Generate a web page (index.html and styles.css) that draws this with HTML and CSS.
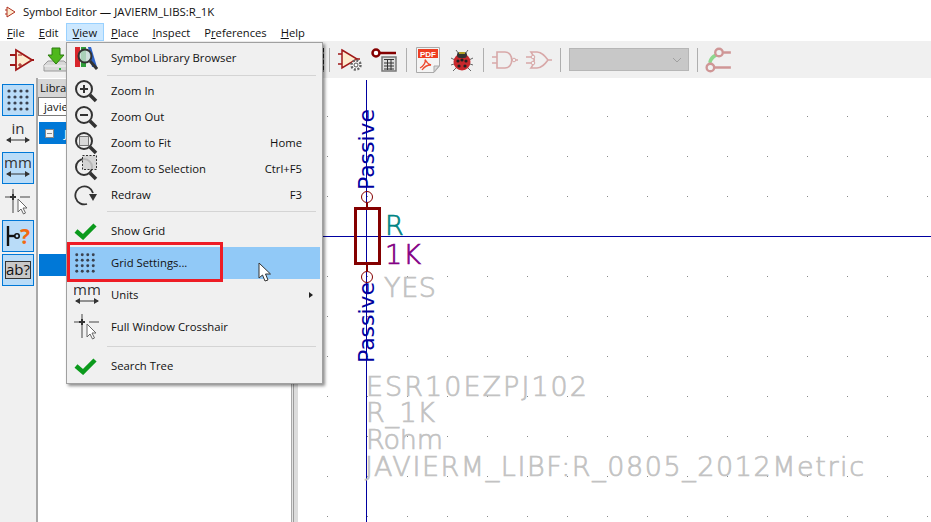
FILE: index.html
```html
<!DOCTYPE html>
<html lang="en">
<head>
  <meta charset="UTF-8">
  <title>Symbol Editor</title>
  <link rel="stylesheet" href="styles.css">
</head>
<body>

  <svg class="defs" width="0" height="0">
    <symbol id="i-grid" viewBox="0 0 24 24">
      <g fill="#3a4250">
        <circle cx="3" cy="3" r="1.6"/><circle cx="9" cy="3" r="1.6"/><circle cx="15" cy="3" r="1.6"/><circle cx="21" cy="3" r="1.6"/>
        <circle cx="3" cy="9" r="1.6"/><circle cx="9" cy="9" r="1.6"/><circle cx="15" cy="9" r="1.6"/><circle cx="21" cy="9" r="1.6"/>
        <circle cx="3" cy="15" r="1.6"/><circle cx="9" cy="15" r="1.6"/><circle cx="15" cy="15" r="1.6"/><circle cx="21" cy="15" r="1.6"/>
        <circle cx="3" cy="21" r="1.6"/><circle cx="9" cy="21" r="1.6"/><circle cx="15" cy="21" r="1.6"/><circle cx="21" cy="21" r="1.6"/>
      </g>
    </symbol>
    <symbol id="i-span" viewBox="0 0 26 24">
      <path d="M2 19H24" stroke="#333" fill="none"/>
      <path d="M1 19l5-3v6zM25 19l-5-3v6z" fill="#333"/>
    </symbol>
    <symbol id="i-cross" viewBox="0 0 26 26">
      <path d="M0 8H9M15 8H25M8 0V6M8 11V24" stroke="#9a9a9a" stroke-width="2" fill="none"/>
      <path d="M5 8H11M8 5V11" stroke="#333" stroke-width="2" fill="none"/>
      <path d="M13 10V23L16 20L18.500 25L20.500 24L18 19H22Z" fill="#fff" stroke="#666"/>
    </symbol>
    <symbol id="i-check" viewBox="0 0 24 18">
      <path d="M2 9L9 15L21 3" stroke="#0b9a1c" stroke-width="4.500" fill="none"/>
    </symbol>
    <symbol id="i-lens" viewBox="0 0 24 24">
      <circle cx="10" cy="10" r="8" fill="none" stroke="#333" stroke-width="2"/>
      <path d="M16 16L22 22" stroke="#333" stroke-width="3.500"/>
    </symbol>
    <symbol id="i-amp" viewBox="0 0 24 24">
      <path d="M6 2L22 12L6 22Z" fill="#fdeccf" stroke="#a01818" stroke-width="1.800"/>
      <path d="M0 7H6M0 17H6M22 12H24" stroke="#a01818" stroke-width="1.800"/>
      <path d="M8 7H12M10 15V19M8 17H12" stroke="#a01818"/>
    </symbol>
  </svg>

  <div class="titlebar">
    <svg class="title-icon" viewBox="0 0 12 12">
      <path d="M2 1L10 6L2 11Z" fill="#fdeccf" stroke="#b03020"/>
      <path d="M0 4H2M0 8H2" stroke="#b03020"/>
    </svg>
    Symbol Editor — JAVIERM_LIBS:R_1K
  </div>

  <div class="menubar">
    <span class="menu-title"><u>F</u>ile</span>
    <span class="menu-title"><u>E</u>dit</span>
    <span class="menu-title active"><u>V</u>iew</span>
    <span class="menu-title"><u>P</u>lace</span>
    <span class="menu-title"><u>I</u>nspect</span>
    <span class="menu-title">P<u>r</u>eferences</span>
    <span class="menu-title"><u>H</u>elp</span>
  </div>

  <div class="toolbar">
    <span class="tool"><svg class="ico-24" viewBox="0 0 24 24"><use href="#i-amp"/></svg></span>
    <span class="tool">
      <svg class="ico-26" viewBox="0 0 26 26">
        <path d="M1 18L5 14H21L25 18V24H1Z" fill="#d8d8d8" stroke="#9a9a9a"/>
        <path d="M1 19H25" stroke="#f4f4f4"/>
        <rect x="16" y="21" width="2" height="2" fill="#27b838"/>
        <path d="M9 1H17V8H21L13 17L5 8H9Z" fill="#4fb81c" stroke="#2c7a10"/>
      </svg>
    </span>
    <div class="tb-hidden"><span class="sliver"></span></div>
    <span class="tb-sep"></span>
    <span class="tool">
      <svg class="ico-26" viewBox="0 0 26 26">
        <path d="M4 3L19 12L4 21Z" fill="#fdeccf" stroke="#a01818" stroke-width="1.500"/>
        <path d="M0 7H4M0 17H4M19 12H22" stroke="#a01818" stroke-width="1.500"/>
        <circle cx="18" cy="18" r="4.500" fill="#fff" stroke="#666" stroke-width="2.500" stroke-dasharray="2 1.500"/>
        <circle cx="18" cy="18" r="2" fill="none" stroke="#555"/>
      </svg>
    </span>
    <span class="tool">
      <svg class="ico-28" viewBox="0 0 28 26">
        <circle cx="5" cy="6" r="3.500" fill="#fff" stroke="#840000" stroke-width="2.500"/>
        <path d="M9 6H25" stroke="#840000" stroke-width="2.500"/>
        <rect x="11" y="10" width="14" height="14" fill="#ddd" stroke="#777" stroke-width="1.500"/>
        <path d="M13 12.500H23M13 16H23M13 19H23M13 22H23M16.500 12V23M20 12V23" stroke="#333"/>
      </svg>
    </span>
    <span class="tb-sep"></span>
    <span class="tool">
      <svg class="ico-26" viewBox="0 0 24 26">
        <path d="M0.500 0.500H23.500V19L18 25.500H0.500Z" fill="#f4f4f4" stroke="#aaa"/>
        <rect x="2" y="2" width="20" height="9" fill="#ee3e22"/>
        <text x="12" y="10" text-anchor="middle" class="pdf-text">PDF</text>
        <path d="M4 21C8 19 10 15 9 12.500C11 16 12 17 15 18C11 18 8 20 6 23" fill="none" stroke="#ee4a30" stroke-width="1.300"/>
        <path d="M18 25L23 19H18Z" fill="#ddd" stroke="#aaa"/>
      </svg>
    </span>
    <span class="tool">
      <svg class="ico-24" viewBox="0 0 24 24">
        <path d="M6 2L9 6M18 2L15 6M5 12L1 10M19 12L23 10M4 16L1 17M20 16L23 17M6 20L3 23M18 20L21 23" stroke="#666" fill="none"/>
        <circle cx="12" cy="14" r="8.500" fill="#c8282c"/>
        <rect x="7" y="4" width="10" height="6" rx="3" fill="#333"/>
        <path d="M9 5H15" stroke="#d8c020" stroke-width="1.500"/>
        <circle cx="8" cy="13" r="1.600" fill="#222"/><circle cx="16" cy="13" r="1.600" fill="#222"/>
        <circle cx="12" cy="12" r="1.600" fill="#222"/><circle cx="9" cy="18" r="1.600" fill="#222"/><circle cx="15" cy="18" r="1.600" fill="#222"/>
      </svg>
    </span>
    <span class="tb-sep"></span>
    <span class="tool">
      <svg class="ico-26" viewBox="0 0 26 18">
        <path d="M5 1H13C22 1 22 17 13 17H5ZM0 6H5M0 12H5M21 9H26" fill="none" stroke="#d8a8a8" stroke-width="1.600"/>
        <circle cx="22" cy="9" r="1.800" fill="#f0f0f0" stroke="#d8a8a8"/>
      </svg>
    </span>
    <span class="tool">
      <svg class="ico-26" viewBox="0 0 26 18">
        <path d="M5 1H11C16 1 19 5 22 9C19 13 16 17 11 17H5C9 12 9 6 5 1ZM0 6H7M0 12H7M22 9H26" fill="none" stroke="#d8a8a8" stroke-width="1.600"/>
        <circle cx="7" cy="6" r="1.800" fill="#f0f0f0" stroke="#d8a8a8"/><circle cx="7" cy="12" r="1.800" fill="#f0f0f0" stroke="#d8a8a8"/>
      </svg>
    </span>
    <span class="tb-sep"></span>
    <div class="combo">
      <svg class="combo-arrow" viewBox="0 0 10 6"><path d="M1 1L5 5L9 1" fill="none" stroke="#a0a0a0"/></svg>
    </div>
    <span class="tb-sep"></span>
    <span class="tool">
      <svg class="ico-28" viewBox="0 0 26 24">
        <path d="M3 14C4 9 8 6 11 6L13 8C8 10 6 13 6 16Z" fill="#8ed88e"/>
        <circle cx="13" cy="5" r="3.500" fill="#f0f0f0" stroke="#cf9696" stroke-width="2.200"/>
        <circle cx="5" cy="19" r="3.500" fill="#f0f0f0" stroke="#cf9696" stroke-width="2.200"/>
        <path d="M17 5H24M9 19H24" stroke="#cf9696" stroke-width="2.200"/>
      </svg>
    </span>
  </div>

  <div class="main">
    <div class="lefttools">
      <div class="ltool on"><svg class="ico-24" viewBox="0 0 24 24"><use href="#i-grid"/></svg></div>
      <div class="ltool">
        <svg class="ico-26 ico-unit" viewBox="0 -3 26 26"><text x="13" y="13" text-anchor="middle" class="icon-text">in</text><use href="#i-span" width="26" height="24"/></svg>
      </div>
      <div class="ltool on">
        <svg class="ico-26 ico-unit" viewBox="0 -3 26 26"><text x="13" y="13" text-anchor="middle" class="icon-text">mm</text><use href="#i-span" width="26" height="24"/></svg>
      </div>
      <div class="ltool"><svg class="ico-26" viewBox="0 0 26 26"><use href="#i-cross"/></svg></div>
      <div class="ltool on">
        <svg class="ico-26" viewBox="0 0 26 26">
          <path d="M3 3V23" stroke="#111" stroke-width="2.400"/>
          <path d="M3 13H10" stroke="#111" stroke-width="2.400"/>
          <circle cx="12" cy="13" r="2.200" fill="none" stroke="#111" stroke-width="1.600"/>
          <text x="20" y="21" text-anchor="middle" class="q-text">?</text>
        </svg>
      </div>
      <div class="ltool on">
        <svg class="ico-26" viewBox="0 0 26 18">
          <rect x="0.500" y="0.500" width="25" height="17" fill="#c8c8c8" stroke="#333"/>
          <text x="13" y="14" text-anchor="middle" class="ab-text">ab?</text>
        </svg>
      </div>
    </div>

    <div class="libpanel">
      <div class="panel-head">Libraries</div>
      <div class="panel-search">javierm</div>
      <div class="tree">
        <div class="tree-row"><span class="expander"></span><span class="tree-label">JAVIERM_LIBS</span></div>
        <div class="tree-gap"></div>
        <div class="tree-row"></div>
      </div>
    </div>
    <div class="sash"></div>

    <div class="canvas">
      <svg class="sheet" viewBox="298 78 633 444">
        <defs>
          <pattern id="dots" x="7" y="36" width="40" height="40" patternUnits="userSpaceOnUse">
            <rect width="1" height="1" fill="#8a8a8a"/>
          </pattern>
        </defs>
        <rect x="298" y="78" width="633" height="444" fill="url(#dots)"/>
        <path d="M366.500 80V522M298 236.500H931" stroke="#0000a0" fill="none"/>
        <path d="M367 203V208M367 264V271" stroke="#840000" stroke-width="2"/>
        <circle cx="367" cy="197" r="5.500" fill="none" stroke="#840000"/>
        <circle cx="367" cy="277" r="5.500" fill="none" stroke="#840000"/>
        <rect x="355.500" y="208.500" width="24" height="55" fill="none" stroke="#840000" stroke-width="3"/>
        <text transform="translate(374 190) rotate(-90)" textLength="81" class="pin-name">Passive</text>
        <text transform="translate(374 363) rotate(-90)" textLength="81" class="pin-name">Passive</text>
        <text x="385" y="235" class="field f-ref">R</text>
        <text x="385" y="264" textLength="36" class="field f-val">1K</text>
        <text x="384" y="297" textLength="52" class="field f-gray">YES</text>
        <text x="366" y="396" textLength="221" class="field f-gray">ESR10EZPJ102</text>
        <text x="366" y="422" textLength="69" class="field f-gray">R_1K</text>
        <text x="366" y="449" textLength="77" class="field f-gray">Rohm</text>
        <text x="365" y="476" textLength="499" class="field f-gray">JAVIERM_LIBF:R_0805_2012Metric</text>
      </svg>
    </div>
  </div>

  <div class="dropdown">
    <div class="item item-first">
      <svg class="ico-24 m-ico" viewBox="0 0 24 24">
        <rect x="1" y="1" width="5" height="20" fill="#d8262c"/>
        <rect x="7" y="1" width="5" height="20" fill="#2f9e3a"/>
        <path d="M14 1H17L23 21H18Z" fill="#2c62c8"/>
        <circle cx="11" cy="10" r="6.500" fill="#c8dcd8" fill-opacity=".8" stroke="#333" stroke-width="2"/>
        <path d="M16 15L23 23" stroke="#333" stroke-width="3"/>
      </svg>
      <span class="item-label">Symbol Library Browser</span>
    </div>
    <div class="sep"></div>
    <div class="item">
      <svg class="ico-24 m-ico" viewBox="0 0 24 24"><use href="#i-lens"/><path d="M6 10H14M10 6V14" stroke="#333" stroke-width="2"/></svg>
      <span class="item-label">Zoom In</span>
    </div>
    <div class="item">
      <svg class="ico-24 m-ico" viewBox="0 0 24 24"><use href="#i-lens"/><path d="M6 10H14" stroke="#333" stroke-width="2"/></svg>
      <span class="item-label">Zoom Out</span>
    </div>
    <div class="item">
      <svg class="ico-24 m-ico" viewBox="0 0 24 24"><use href="#i-lens"/><rect x="5.500" y="5.500" width="9" height="9" fill="#d8d8d8" stroke="#777"/></svg>
      <span class="item-label">Zoom to Fit</span><span class="shortcut">Home</span>
    </div>
    <div class="item">
      <svg class="ico-26 m-ico m-zsel" viewBox="0 0 26 26">
        <use href="#i-lens" width="24" height="24" y="2"/>
        <rect x="8.500" y="0.500" width="14" height="14" fill="#cfcfcf" fill-opacity=".85" stroke="#333" stroke-dasharray="2 1.500"/>
      </svg>
      <span class="item-label">Zoom to Selection</span><span class="shortcut">Ctrl+F5</span>
    </div>
    <div class="item">
      <svg class="ico-24 m-ico" viewBox="0 0 24 24">
        <path d="M13 21A9 9 0 1 1 19 10" fill="none" stroke="#333" stroke-width="1.800"/>
        <path d="M15 11H23L19 18Z" fill="#333"/>
      </svg>
      <span class="item-label">Redraw</span><span class="shortcut">F3</span>
    </div>
    <div class="sep"></div>
    <div class="item item-check">
      <svg class="ico-check m-ico" viewBox="0 0 24 18"><use href="#i-check"/></svg>
      <span class="item-label">Show Grid</span>
    </div>
    <div class="item item-tall hover">
      <svg class="ico-22 m-ico" viewBox="0 0 24 24"><use href="#i-grid"/></svg>
      <span class="item-label">Grid Settings...</span>
    </div>
    <div class="item item-tall">
      <svg class="ico-26 m-ico m-unit" viewBox="0 -3 26 26"><text x="13" y="13" text-anchor="middle" class="icon-text">mm</text><use href="#i-span" width="26" height="24"/></svg>
      <span class="item-label">Units</span>
      <span class="submenu-arrow"></span>
    </div>
    <div class="item item-tall">
      <svg class="ico-26 m-ico" viewBox="0 0 26 26"><use href="#i-cross"/></svg>
      <span class="item-label">Full Window Crosshair</span>
    </div>
    <div class="sep"></div>
    <div class="item item-last">
      <svg class="ico-check m-ico" viewBox="0 0 24 18"><use href="#i-check"/></svg>
      <span class="item-label">Search Tree</span>
    </div>
    <div class="callout"></div>
  </div>

  <svg class="cursor" viewBox="0 0 14 20">
    <path d="M1 1V16L4.500 13L7 19L10 18L7.500 12H12.500Z" fill="#fff" stroke="#333"/>
  </svg>

</body>
</html>
```

FILE: styles.css
```css
html, body {
  margin: 0;
  height: 100%;
}

body {
  position: relative;
  width: 931px;
  height: 522px;
  overflow: hidden;
  display: flex;
  flex-direction: column;
  background: #fff;
  color: #111;
  font-family: "Open Sans", "Noto Sans", sans-serif;
  font-size: 11.2px;
}

.defs {
  position: absolute;
}

.icon-text {
  font-family: "Open Sans", sans-serif;
  font-size: 15px;
  fill: #333;
}

.pdf-text {
  font-family: "Liberation Sans", sans-serif;
  font-size: 8px;
  font-weight: bold;
  fill: #fff;
}

.q-text {
  font-family: "Open Sans", sans-serif;
  font-size: 21px;
  font-weight: bold;
  fill: #f26a10;
}

.ab-text {
  font-family: "Open Sans", sans-serif;
  font-size: 15px;
  fill: #111;
}

.ico-22 { width: 22px; height: 22px; }
.ico-24 { width: 24px; height: 24px; }
.ico-26 { width: 26px; height: 26px; }
.ico-28 { width: 28px; height: 26px; }
.ico-check { width: 24px; height: 18px; }
.ico-unit { margin-top: -6px; }

/* title + menu */
.titlebar {
  height: 23px;
  display: flex;
  align-items: center;
  padding-left: 5px;
  font-size: 11.4px;
}

.title-icon {
  width: 12px;
  height: 12px;
  margin-right: 6px;
}

.menubar {
  height: 18px;
  display: flex;
}

.menu-title {
  display: flex;
  align-items: center;
  white-space: pre;
  padding: 0 6px;
  border: 1px solid transparent;
}

.menu-title.active {
  background: #cce8ff;
  border-color: #99d1ff;
}

/* top toolbar */
.toolbar {
  height: 37px;
  background: #f0f0f0;
  display: flex;
  align-items: center;
  padding-left: 6px;
  gap: 2px;
}

.tool {
  width: 32px;
  display: flex;
  justify-content: center;
  align-items: center;
}

.tb-hidden {
  width: 250px;
  display: flex;
  justify-content: flex-end;
}

.sliver {
  width: 2px;
  height: 24px;
  background: repeating-linear-gradient(#222 0 4px, #888 4px 6px);
}

.tb-sep {
  width: 1px;
  height: 24px;
  margin: 0 3px;
  background: #aeaeae;
}

.combo {
  width: 120px;
  height: 23px;
  margin: 0 3px;
  box-sizing: border-box;
  background: #c8c8c8;
  border: 1px solid #b6b6b6;
  display: flex;
  align-items: center;
  justify-content: flex-end;
  padding-right: 6px;
}

.combo-arrow {
  width: 10px;
  height: 6px;
}

/* main area */
.main {
  flex: 1;
  display: flex;
  min-height: 0;
}

.lefttools {
  width: 36px;
  flex: none;
  background: #f0f0f0;
  padding-top: 6px;
  box-sizing: border-box;
}

.ltool {
  width: 32px;
  height: 32px;
  margin: 0 0 2px 2px;
  box-sizing: border-box;
  border: 1px solid transparent;
  display: flex;
  align-items: center;
  justify-content: center;
}

.ltool.on {
  background: #b9dcf8;
  border-color: #0078d7;
}

.libpanel {
  width: 255px;
  flex: none;
  border-left: 2px solid #a8a8a8;
  box-sizing: border-box;
  display: flex;
  flex-direction: column;
}

.panel-head {
  height: 18px;
  margin-top: 1px;
  padding-left: 2px;
  background: #d6d6d6;
  line-height: 18px;
}

.panel-search {
  height: 19px;
  padding-left: 5px;
  border: 1px solid #7a7a7a;
  box-sizing: border-box;
  line-height: 17px;
  background: #fff;
}

.tree {
  flex: 1;
  padding: 6px 0 0 1px;
  background: #fff;
}

.tree-row {
  height: 22px;
  background: #0078d7;
  color: #fff;
  display: flex;
  align-items: center;
}

.tree-gap {
  height: 110px;
}

.expander {
  width: 9px;
  height: 9px;
  margin-left: 6px;
  box-sizing: border-box;
  border: 1px solid #888;
  background: linear-gradient(#888, #888) center / 5px 1px no-repeat, #f4f4f4;
}

.tree-label {
  margin-left: 10px;
}

.sash {
  width: 7px;
  flex: none;
  background: linear-gradient(90deg, #a8a8a8 0 1px, #e4e4e4 1px 2px, #9c9c9c 2px 3px, #dcdcdc 3px);
}

.canvas {
  flex: 1;
  min-width: 0;
}

.sheet {
  display: block;
  width: 633px;
  height: 444px;
}

.field {
  font-family: "DejaVu Sans", "Liberation Sans", sans-serif;
  font-size: 27px;
  font-weight: 200;
  stroke-width: 0.7px;
}

.pin-name {
  font-family: "DejaVu Sans", "Liberation Sans", sans-serif;
  font-size: 22px;
  fill: #0000a0;
}

.f-ref { fill: #008484; stroke: #008484; }
.f-val { fill: #840084; stroke: #840084; }
.f-gray { fill: #c2c2c2; stroke: #c2c2c2; }

/* open menu, lies over the window */
.dropdown {
  position: absolute;
  left: 66px;
  top: 42px;
  width: 257px;
  height: 342px;
  box-sizing: border-box;
  background: #f0f0f0;
  border: 1px solid #a0a0a0;
  box-shadow: 2px 2px 3px rgba(0, 0, 0, 0.45);
  font-size: 11.3px;
}

.item {
  height: 26px;
  margin-right: 2px;
  display: flex;
  align-items: center;
  position: relative;
}

.item-first { height: 29px; }
.item-tall { height: 32px; }
.item-check { height: 33px; }
.item-last { height: 34px; }

.item.hover {
  background: #91c9f7;
}

.m-ico {
  position: absolute;
  left: 7px;
  top: 50%;
  transform: translateY(-50%);
}

.m-zsel {
  margin-top: -1px;
}

.m-unit {
  margin-top: -3px;
}

.item-label {
  margin-left: 44px;
  padding-bottom: 2px;
}

.item-first .item-label,
.item-check .item-label {
  padding-bottom: 0;
}

.shortcut {
  margin-left: auto;
  margin-right: 18px;
  padding-bottom: 2px;
}

.submenu-arrow {
  margin-left: auto;
  margin-right: 7px;
  border-left: 4px solid #222;
  border-top: 3.5px solid transparent;
  border-bottom: 3.5px solid transparent;
}

.sep {
  height: 1px;
  margin: 2.5px 6px 2.5px 40px;
  background: #d4d4d4;
}

.callout {
  position: absolute;
  left: 0;
  top: 199px;
  width: 156px;
  height: 40px;
  box-sizing: border-box;
  border: 3px solid #ee1c25;
}

.cursor {
  position: absolute;
  left: 258px;
  top: 262px;
  width: 14px;
  height: 20px;
}
```
